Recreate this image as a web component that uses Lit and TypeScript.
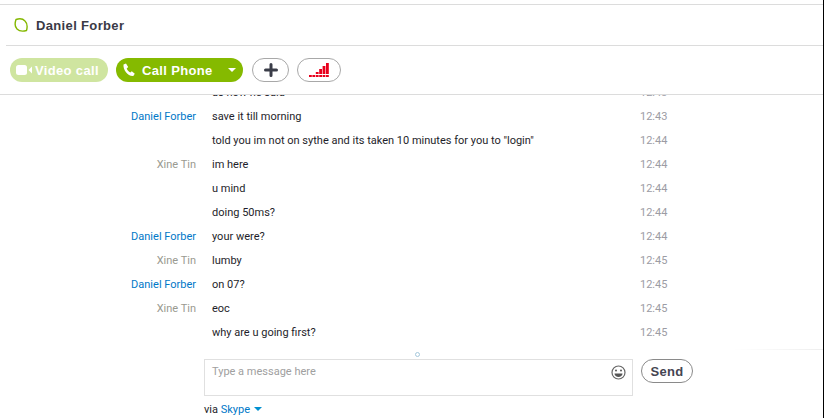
import { LitElement, css, html, svg } from 'lit';
import { customElement } from 'lit/decorators.js';

interface Message {
  from: string;
  who: 'them' | 'me' | '';
  text: string;
  time: string;
}

const messages: Message[] = [
  { from: '', who: '', text: 'as how he said', time: '12:43' },
  { from: 'Daniel Forber', who: 'them', text: 'save it till morning', time: '12:43' },
  { from: '', who: '', text: 'told you im not on sythe and its taken 10 minutes for you to "login"', time: '12:44' },
  { from: 'Xine Tin', who: 'me', text: 'im here', time: '12:44' },
  { from: '', who: '', text: 'u mind', time: '12:44' },
  { from: '', who: '', text: 'doing 50ms?', time: '12:44' },
  { from: 'Daniel Forber', who: 'them', text: 'your were?', time: '12:44' },
  { from: 'Xine Tin', who: 'me', text: 'lumby', time: '12:45' },
  { from: 'Daniel Forber', who: 'them', text: 'on 07?', time: '12:45' },
  { from: 'Xine Tin', who: 'me', text: 'eoc', time: '12:45' },
  { from: '', who: '', text: 'why are u going first?', time: '12:45' },
];

// height of each signal column above the dashed base row
const signalBars = [0, 0, 2, 5, 8, 11].map((h, i) => svg`
  <rect x=${i * 3.4} y="12" width="2.8" height="2"></rect>
  ${h ? svg`<rect x=${i * 3.4} y=${11 - h} width="2.8" height=${h}></rect>` : ''}
`);

@customElement('app-root')
export class AppRoot extends LitElement {
  static styles = css`
    :host {
      display: block;
      width: 826px;
      height: 418px;
      overflow: hidden;
      background: #fff;
      font-family: Roboto, "Noto Sans", sans-serif;
      font-size: 11px;
      color: #1e1e2a;
    }

    .window {
      width: 823px;
      height: 418px;
      border-right: 1px solid #000;
      display: flex;
      flex-direction: column;
      padding-top: 4px;
      box-sizing: content-box;
    }

    .title {
      height: 40px;
      border-top: 1px solid #dcdcdc;
      display: flex;
      align-items: center;
      gap: 8px;
      padding-left: 14px;
      flex: none;
    }
    .title svg { display: block; }
    .title h1 {
      margin: 0;
      font-family: "Liberation Sans", Arial, sans-serif;
      font-size: 13px;
      font-weight: 700;
      letter-spacing: .35px;
      color: #3a3a46;
    }

    .toolbar {
      height: 48px;
      margin-left: 6px;
      border-top: 1px solid #dcdcdc;
      display: flex;
      align-items: center;
      gap: 8px;
      padding-left: 4px;
      flex: none;
    }
    .pill {
      height: 24px;
      border-radius: 12px;
      display: flex;
      align-items: center;
      box-sizing: border-box;
      font-family: "Liberation Sans", Arial, sans-serif;
      font-size: 13px;
      font-weight: 700;
      letter-spacing: .35px;
      color: #fff;
    }
    .video { width: 98px; background: #cfe5a0; padding-left: 6px; gap: 2px; }
    .call { width: 127px; background: #85ba00; padding-left: 6px; gap: 6px; }
    .call .caret {
      width: 0;
      height: 0;
      border: 4px solid transparent;
      border-top: 4px solid #fff;
      border-bottom: 0;
      margin-left: auto;
      margin-right: 7px;
    }
    .outline { border: 1px solid #a8a8a8; background: #fff; justify-content: center; }
    .add { width: 37px; margin-left: 1px; }
    .signal { width: 44px; }

    .log {
      height: 264px;
      border-top: 1px solid #dcdcdc;
      overflow: hidden;
      flex: none;
    }
    .row {
      height: 24px;
      display: grid;
      grid-template-columns: 196px 412px 1fr;
      column-gap: 16px;
      align-items: center;
      line-height: 24px;
    }
    .log .row:first-child { margin-top: -14px; }
    .from { text-align: right; white-space: nowrap; }
    .from.them { color: #0078c8; }
    .from.me { color: #9a9a90; }
    .time { color: #9c9ca4; }

    .composer {
      display: grid;
      grid-template-columns: 429px auto;
      column-gap: 8px;
      margin-left: 204px;
      position: relative;
    }
    .fade {
      position: absolute;
      right: 0;
      top: -10px;
      width: 90px;
      height: 1px;
      background: linear-gradient(to right, #fff, #eeeeee);
    }
    .grip {
      position: absolute;
      left: 211px;
      top: -7px;
      width: 3px;
      height: 3px;
      border: 1px solid #a5c8dc;
      border-radius: 50%;
    }
    .input {
      height: 37px;
      box-sizing: border-box;
      border: 1px solid #e0e0e0;
      padding: 5px 7px;
      color: #a0a0a0;
      display: flex;
      justify-content: space-between;
    }
    .input svg { margin-right: -1px; }
    .send {
      width: 52px;
      height: 24px;
      border: 1px solid #8a8a8a;
      border-radius: 12px;
      box-sizing: border-box;
      display: flex;
      align-items: center;
      justify-content: center;
      font-family: "Liberation Sans", Arial, sans-serif;
      font-size: 13px;
      font-weight: 700;
      letter-spacing: .35px;
      color: #454552;
    }
    .via { margin-top: 7px; grid-column: 1 / 3; }
    .via a { color: #0078c8; }
    .via i {
      display: inline-block;
      width: 0;
      height: 0;
      border: 4px solid transparent;
      border-top: 4px solid #0090d0;
      border-bottom: 0;
      margin-left: 4px;
      vertical-align: 2px;
    }
  `;

  render() {
    return html`
      <div class="window">
        <div class="title">
          <svg width="14" height="14" viewBox="0 0 14 14" fill="none" stroke="#84b800" stroke-width="1.4" stroke-linejoin="round">
            <path d="M2 1.500C5 .5 9 .8 11 3c2 2 2.500 6 1.500 9.500C9 13.500 5 13 3 11 1 9 .8 5 2 1.500Z"></path>
          </svg>
          <h1>Daniel Forber</h1>
        </div>
        <div class="toolbar">
          <div class="pill video">
            <svg width="17" height="10" viewBox="0 0 17 10" fill="#fff">
              <rect x="0" y="0" width="11" height="10" rx="2.500"></rect>
              <path d="M12.500 5 16 1.500v7Z"></path>
            </svg>
            Video call
          </div>
          <div class="pill call">
            <svg width="14" height="14" viewBox="0 0 14 14" fill="#fff">
              <path d="M1.500 1.500 4 .5l2.200 3.500-1.500 1.500c.5 1.500 2 3.300 3.600 4l1.500-1.200 3 2.500-1.500 2.200C6 13.500.9 7 1.500 1.500Z"></path>
            </svg>
            Call Phone
            <span class="caret"></span>
          </div>
          <div class="pill outline add">
            <svg width="14" height="14" viewBox="0 0 14 14" fill="none" stroke="#3a3d48" stroke-width="3" stroke-linecap="round">
              <path d="M7 1.500v11M1.500 7h11"></path>
            </svg>
          </div>
          <div class="pill outline signal">
            <svg width="20" height="14" viewBox="0 0 20 14" fill="#e8001c">${signalBars}</svg>
          </div>
        </div>
        <div class="log">
          ${messages.map((m) => html`
            <div class="row">
              <span class="from ${m.who}">${m.from}</span>
              <span>${m.text}</span>
              <span class="time">${m.time}</span>
            </div>
          `)}
        </div>
        <div class="composer">
          <span class="fade"></span>
          <span class="grip"></span>
          <div class="input">
            Type a message here
            <svg width="15" height="15" viewBox="0 0 15 15" fill="none" stroke="#666" stroke-width="1.200">
              <circle cx="7.500" cy="7.500" r="6.500"></circle>
              <circle cx="5" cy="5.500" r="1" fill="#555" stroke="none"></circle>
              <circle cx="10" cy="5.500" r="1" fill="#555" stroke="none"></circle>
              <path d="M3.500 8.500h8c0 2-2 3.500-4 3.500s-4-1.500-4-3.500Z" fill="#555" stroke="none"></path>
            </svg>
          </div>
          <div class="send">Send</div>
          <div class="via">via <a>Skype</a><i></i></div>
        </div>
      </div>
    `;
  }
}
